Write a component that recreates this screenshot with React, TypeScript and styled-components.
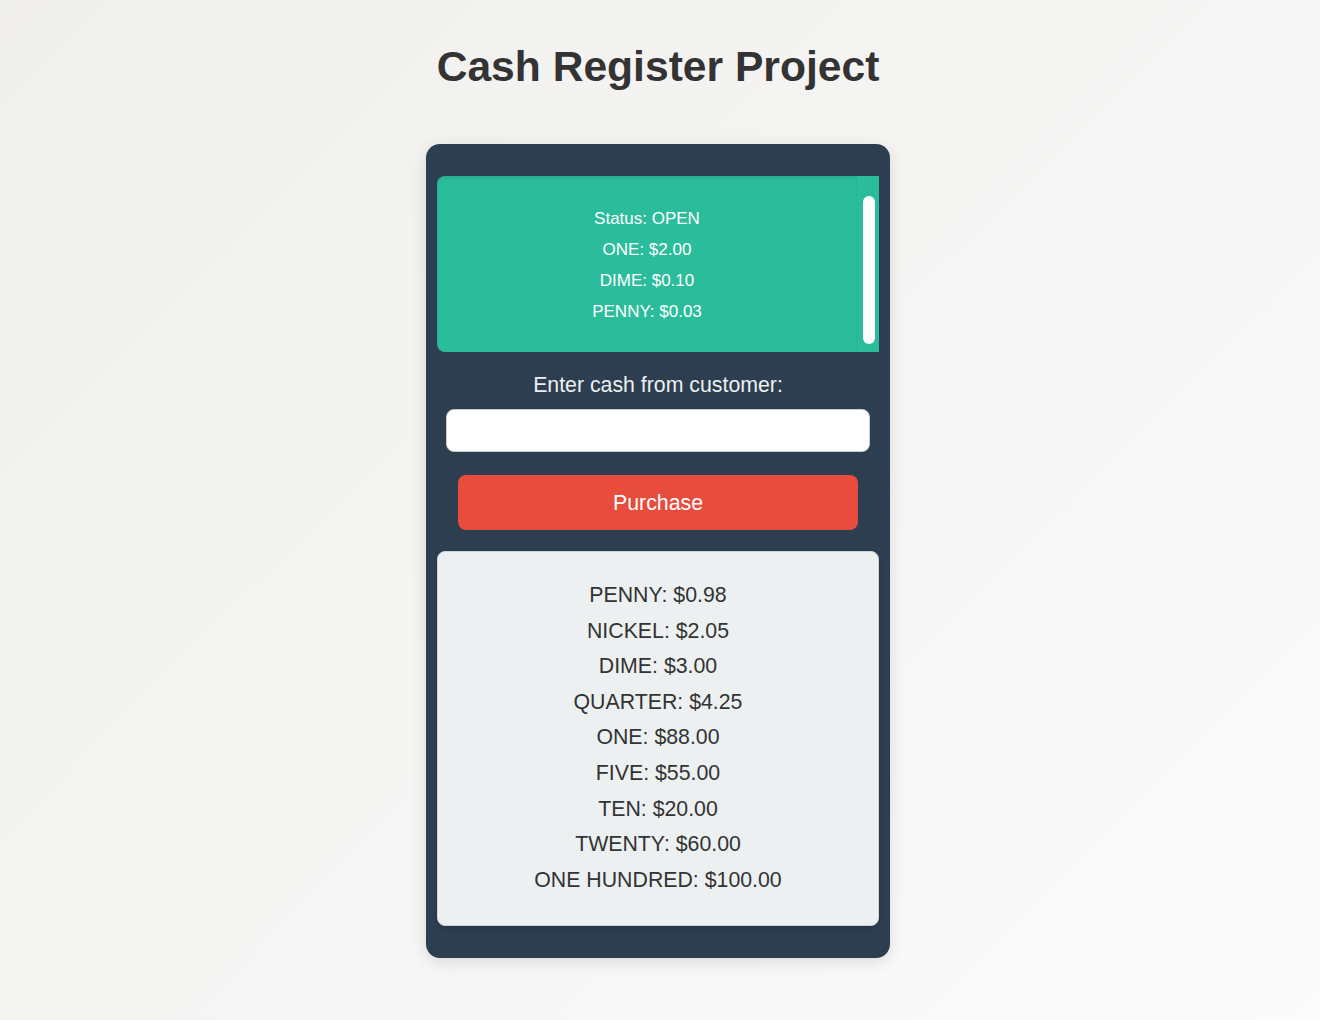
import * as React from 'react'
import styled, { createGlobalStyle } from 'styled-components'

const GlobalStyle = createGlobalStyle`
  html, body {
    margin: 0;
    padding: 0;
  }
  body {
    min-height: 1020px;
    font-family: "Liberation Sans", Arial, sans-serif;
    background: linear-gradient(135deg, #f0efed 0%, #fbfbfb 100%);
    color: #333;
  }
`

const Page = styled.main`
  display: flex;
  flex-direction: column;
  align-items: center;
  padding: 38px 4px 0 0;
`

const Title = styled.h1`
  margin: 0 0 50px;
  font-size: 42.6px;
  line-height: 56px;
  font-weight: 700;
  color: #333;
`

const Card = styled.section`
  width: 464px;
  box-sizing: border-box;
  padding: 32px 11px;
  background: #2c3e50;
  border-radius: 14px;
  box-shadow: 0 4px 16px rgba(0, 0, 0, 0.12);
  display: flex;
  flex-direction: column;
  align-items: center;
`

const Display = styled.div`
  width: 100%;
  height: 176px;
  display: flex;
  background: #2bbc9b;
  border-radius: 8px 0 0 8px;
`

const DisplayText = styled.div`
  flex: 1;
  padding: 27px 0 25px;
  border-radius: 8px 0 0 8px;
  box-shadow: inset 0 2px 3px rgba(0, 0, 0, 0.08);
  color: #fff;
  font-size: 17px;
  line-height: 31px;
  text-align: center;
`

const Rail = styled.div`
  width: 22px;
  box-sizing: border-box;
  padding: 20px 4px 8px 6px;
  display: flex;
`

const Thumb = styled.div`
  flex: 1;
  background: #fff;
  border-radius: 6px;
`

const Label = styled.label`
  margin-top: 21px;
  font-size: 21.3px;
  line-height: 24px;
  color: #ecf0f1;
`

const CashInput = styled.input`
  margin-top: 12px;
  width: 424px;
  height: 43px;
  box-sizing: border-box;
  border: 1px solid #ccc;
  border-radius: 8px;
  background: #fff;
  font-size: 18px;
  padding: 0 12px;
  outline: none;
`

const PurchaseButton = styled.button`
  margin-top: 23px;
  width: 400px;
  height: 55px;
  padding: 2px 0 0;
  border: none;
  border-radius: 8px;
  background: #e74c3c;
  color: #fff;
  font-family: inherit;
  font-size: 21.3px;
  cursor: pointer;
`

const Drawer = styled.div`
  margin-top: 21px;
  width: 100%;
  box-sizing: border-box;
  padding: 26px 0 27px;
  background: #ecf0f1;
  border: 1px solid #cfd6d9;
  border-radius: 8px;
  box-shadow: 0 2px 5px rgba(0, 0, 0, 0.15);
  color: #333;
  font-size: 21.3px;
  line-height: 35.6px;
  text-align: center;
`

const Line = styled.div``

const changeDue = ['Status: OPEN', 'ONE: $2.00', 'DIME: $0.10', 'PENNY: $0.03']

const drawer = [
  ['PENNY', 0.98],
  ['NICKEL', 2.05],
  ['DIME', 3],
  ['QUARTER', 4.25],
  ['ONE', 88],
  ['FIVE', 55],
  ['TEN', 20],
  ['TWENTY', 60],
  ['ONE HUNDRED', 100],
] as const

export default function App() {
  return (
    <>
      <GlobalStyle />
      <Page>
        <Title>Cash Register Project</Title>
        <Card>
          <Display>
            <DisplayText>
              {changeDue.map(t => <Line key={t}>{t}</Line>)}
            </DisplayText>
            <Rail><Thumb /></Rail>
          </Display>
          <Label htmlFor="cash">Enter cash from customer:</Label>
          <CashInput id="cash" type="number" />
          <PurchaseButton type="button">Purchase</PurchaseButton>
          <Drawer>
            {drawer.map(([name, amount]) => (
              <Line key={name}>{name}: ${amount.toFixed(2)}</Line>
            ))}
          </Drawer>
        </Card>
      </Page>
    </>
  )
}
